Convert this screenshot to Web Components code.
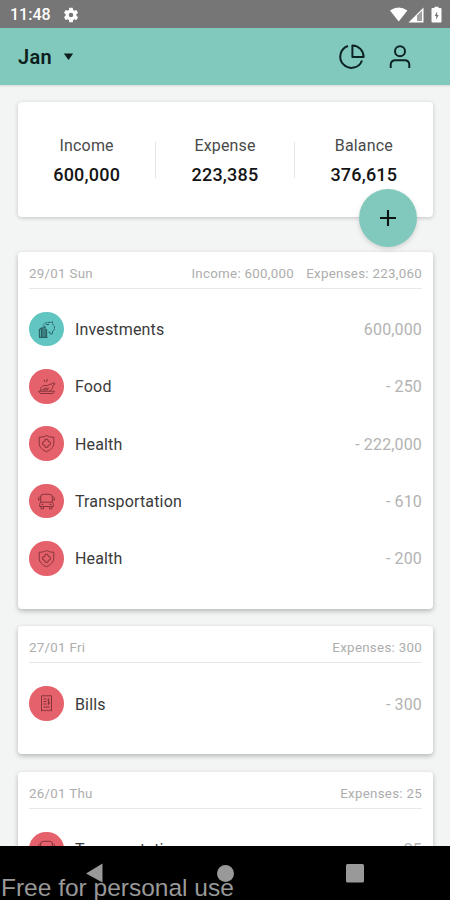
<!DOCTYPE html>
<html lang="en">
<head>
<meta charset="utf-8">
<title>Budget</title>
<style>
  body {
    margin: 0;
    background: #f3f5f4;
    font-family: Roboto, "Liberation Sans", sans-serif;
  }
</style>
</head>
<body>
<budget-app>
  <status-bar slot="top">11:48</status-bar>
  <app-header slot="top">Jan</app-header>

  <summary-card>
    <summary-item label="Income">600,000</summary-item>
    <summary-item label="Expense">223,385</summary-item>
    <summary-item label="Balance">376,615</summary-item>
  </summary-card>

  <day-card date="29/01 Sun" income="600,000" expenses="223,060">
    <entry-row icon="invest" amount="600,000">Investments</entry-row>
    <entry-row icon="food" amount="- 250">Food</entry-row>
    <entry-row icon="health" amount="- 222,000">Health</entry-row>
    <entry-row icon="bus" amount="- 610">Transportation</entry-row>
    <entry-row icon="health" amount="- 200">Health</entry-row>
  </day-card>
  <day-card date="27/01 Fri" expenses="300">
    <entry-row icon="bills" amount="- 300">Bills</entry-row>
  </day-card>
  <day-card date="26/01 Thu" expenses="25">
    <entry-row icon="bus" amount="- 25">Transportation</entry-row>
  </day-card>

  <nav-bar slot="bottom">Free for personal use</nav-bar>
</budget-app>

<script>
//App shell
class BudgetApp extends HTMLElement {
  constructor() {
    super();
    this.attachShadow({ mode: "open" });
    this.shadowRoot.innerHTML = `
      <style>
      :host {
        display: flex;
        flex-direction: column;
        height: 900px;
        overflow: hidden;
      }

      main {
        flex: 1;
        min-height: 0;
        overflow: hidden;
        box-sizing: border-box;
        padding: 17px 17px 0 18px;
      }
      </style>
      <slot name="top"></slot>
      <main><slot></slot></main>
      <slot name="bottom"></slot>
    `;
  }
}
customElements.define("budget-app", BudgetApp);

//Status bar
class StatusBar extends HTMLElement {
  constructor() {
    super();
    this.attachShadow({ mode: "open" });
    this.shadowRoot.innerHTML = `
      <style>
      :host {
        display: flex;
        align-items: center;
        flex: none;
        height: 28px;
        box-sizing: border-box;
        padding: 2px 8px 0 10px;
        background: #767676;
        color: white;
        font-size: 16px;
        font-weight: 500;
        line-height: 20px;
      }

      svg { display: block; fill: white; }
      .gear { margin-left: 11px; margin-right: auto; }
      </style>
      <slot></slot>
      <svg class="gear" width="18" height="18" viewBox="0 0 24 24"><path d="M19.14 12.94c.04-.3.06-.61.06-.94s-.02-.64-.07-.94l2.03-1.58a.5.5 0 0 0 .12-.61l-1.92-3.32a.5.5 0 0 0-.59-.22l-2.39.96a7 7 0 0 0-1.62-.94l-.36-2.54a.5.5 0 0 0-.48-.41h-3.84a.5.5 0 0 0-.47.41l-.36 2.54c-.59.24-1.13.57-1.62.94l-2.39-.96a.5.5 0 0 0-.59.22L2.74 8.87a.5.5 0 0 0 .12.61l2.03 1.58a6 6 0 0 0 0 1.88l-2.03 1.58a.5.5 0 0 0-.12.61l1.92 3.32c.12.22.37.29.59.22l2.39-.96c.5.38 1.03.7 1.62.94l.36 2.54c.05.24.24.41.48.41h3.84c.24 0 .44-.17.47-.41l.36-2.54a7 7 0 0 0 1.62-.94l2.39.96c.22.08.47 0 .59-.22l1.92-3.32a.5.5 0 0 0-.12-.61zM12 15a3 3 0 1 1 0-6 3 3 0 0 1 0 6z"/></svg>
      <svg width="52" height="18" viewBox="0 0 52 18">
        <path d="M0 4.500Q8.700 -1.500 17.400 4.500L8.700 15.500z"/>
        <path fill-rule="evenodd" d="M33.500 1.500V16.500H18.500zM27 9.800V15H32V4.800z"/>
        <path d="M27 9.800L32 4.800V15H27z" opacity=".3"/>
        <path fill-rule="evenodd" d="M44.500 2V.8h4V2H50.500a1 1 0 0 1 1 1v12.500a1 1 0 0 1-1 1h-8a1 1 0 0 1-1-1V3a1 1 0 0 1 1-1zM47.200 5.500l-2.500 4.500h1.500V13.500l2.500-4.500h-1.500z"/>
      </svg>
    `;
  }
}
customElements.define("status-bar", StatusBar);

//Header with the month picker
class AppHeader extends HTMLElement {
  constructor() {
    super();
    this.attachShadow({ mode: "open" });
    this.shadowRoot.innerHTML = `
      <style>
      :host {
        display: flex;
        align-items: center;
        flex: none;
        height: 57px;
        box-sizing: border-box;
        padding: 0 37px 0 18px;
        background: #82c9bd;
        box-shadow: 0 1px 2px rgba(0, 0, 0, 0.12);
        color: #0d1f1d;
        font-size: 20px;
        font-weight: 600;
        letter-spacing: 0.3px;
      }

      svg { display: block; }
      .caret { margin-left: 11px; margin-right: auto; }
      .icon {
        fill: none;
        stroke: #0d2422;
        stroke-width: 2;
        stroke-linejoin: round;
      }
      .user { margin-left: 22px; }
      </style>
      <slot></slot>
      <svg class="caret" width="11" height="8" viewBox="0 0 11 8"><path d="M.8 .5H10.200L5.500 7z" fill="#0d1f1d"/></svg>
      <svg class="icon" width="28" height="28" viewBox="0 0 28 28">
        <path d="M11 3A11.200 11.200 0 1 0 25 17.500"/>
        <path d="M15.400 2.400V14H26.600A11.500 11.500 0 0 0 15.400 2.400z"/>
      </svg>
      <svg class="icon user" width="26" height="28" viewBox="0 0 26 28">
        <circle cx="13" cy="8.300" r="5"/>
        <path d="M3.700 25V22Q3.700 17.300 8.500 17.300H17.500Q22.300 17.300 22.300 22V25"/>
      </svg>
    `;
  }
}
customElements.define("app-header", AppHeader);

//Summary
class SummaryCard extends HTMLElement {
  constructor() {
    super();
    this.attachShadow({ mode: "open" });
    this.shadowRoot.innerHTML = `
      <style>
      :host {
        display: grid;
        grid-template-columns: repeat(3, 1fr);
        align-items: center;
        position: relative;
        height: 115px;
        margin-bottom: 35px;
        box-sizing: border-box;
        background: white;
        border-radius: 4px;
        box-shadow: 0 1px 4px rgba(0, 0, 0, 0.2);
      }

      button {
        position: absolute;
        right: 16.500px;
        bottom: -29.500px;
        width: 58px;
        height: 58px;
        padding: 0;
        border: 0;
        border-radius: 50%;
        background: #82c9bd;
        box-shadow: 0 2px 5px rgba(0, 0, 0, 0.14);
      }

      svg { display: block; margin: auto; }
      </style>
      <slot></slot>
      <button aria-label="Add"><svg width="18" height="18" viewBox="0 0 18 18"><path d="M9 1V17M1 9H17" stroke="#0b1614" stroke-width="2.100"/></svg></button>
    `;
  }
}
customElements.define("summary-card", SummaryCard);

class SummaryItem extends HTMLElement {
  constructor() {
    super();
    this.attachShadow({ mode: "open" });
  }

  connectedCallback() {
    this.shadowRoot.innerHTML = `
      <style>
      :host {
        display: flex;
        flex-direction: column;
        align-items: center;
        justify-content: center;
        height: 36px;
        padding-top: 1px;
        box-sizing: border-box;
        line-height: 29px;
        color: #141414;
        font-size: 18px;
        font-weight: 500;
        letter-spacing: 0.2px;
      }

      :host(:not(:last-of-type)) { border-right: 1px solid #e4e4e4; }

      .label {
        color: #4a4a4a;
        font-size: 16px;
        font-weight: 400;
        letter-spacing: 0.15px;
      }
      </style>
      <span class="label">${this.getAttribute("label")}</span>
      <span><slot></slot></span>
    `;
  }
}
customElements.define("summary-item", SummaryItem);

//One day of entries
class DayCard extends HTMLElement {
  constructor() {
    super();
    this.attachShadow({ mode: "open" });
  }

  connectedCallback() {
    const income = this.getAttribute("income");
    const expenses = this.getAttribute("expenses");

    this.shadowRoot.innerHTML = `
      <style>
      :host {
        display: block;
        margin-bottom: 17.500px;
        padding: 0 11px 22px;
        background: white;
        border-radius: 4px;
        box-shadow: 0 2px 5px rgba(0, 0, 0, 0.26);
      }

      header {
        display: flex;
        align-items: center;
        gap: 12px;
        height: 36px;
        margin-bottom: 11.500px;
        border-bottom: 1px solid #e8e8e8;
        color: #adadad;
        font-size: 13.300px;
        letter-spacing: 0.3px;
      }

      header span { padding-top: 7px; }
      .date { margin-right: auto; }
      </style>
      <header>
        <span class="date">${this.getAttribute("date")}</span>
        ${income ? `<span>Income: ${income}</span>` : ""}
        <span>Expenses: ${expenses}</span>
      </header>
      <slot></slot>
    `;
  }
}
customElements.define("day-card", DayCard);

//Entry
const icons = {
  invest: `
    <path d="M2.500 17V9.500L4.500 8V17M6 17V7.500L8 6.500V17M9.500 17V9M2 17.300H10.500" stroke-width="1.300"/>
    <path d="M6 5.500C7.500 3 10 2 13 2.500L15.500 1.800V4L17.500 6.500V9.500L15.500 11V14H13V12.200H11" stroke-dasharray="2.500 .6"/>
    <path d="M9 4.500H12"/>`,
  food: `
    <path d="M1.500 14.200H17.500L16 16.500H3.500z"/>
    <path d="M3.500 14C3 10.500 5.500 8 9 8.500C11.500 9 12 6.800 14.500 7L17 5.500L18 7L15.800 8.500C16 11 14.500 13 12.500 14M7 11.500C8.500 10.500 10 12 12 11M5 12.800H11"/>
    <path d="M7 2.500L8 5M10.500 2L9.500 5"/>`,
  health: `
    <path d="M9.500 1.500C11.500 2.800 14 3.300 16.800 3.200V9C16.800 13.500 13.500 16 9.500 17.700C5.500 16 2.200 13.500 2.200 9V3.200C5 3.300 7.500 2.800 9.500 1.500z"/>
    <path d="M8 5.300H11V7.300L13.300 8V10.800L11 11.300V13.300H8V11.300L5.700 10.800V8L8 7.300z"/>`,
  bus: `
    <path d="M3.700 10.200V5Q3.700 2.300 6.200 2.300H12.800Q15.300 2.300 15.300 5V10.200zM3.700 10.200Q2.700 11 2.700 12.500V14.500H16.300V12.500Q16.300 11 15.300 10.200"/>
    <path d="M3.700 4.800H2.700L1.500 6V8H3.500M15.300 4.800H16.300L17.500 6V8H15.500M4 14.500V16.800H6.500V14.500M12.500 14.500V16.800H15V14.500M4.500 12.400H6.500M12.500 12.400H14.500"/>`,
  bills: `
    <path d="M4.500 1.800H14.500V17L12.800 16L11.200 17L9.500 16L7.800 17L6.200 16L4.500 17z"/>
    <path d="M6.500 5H9.500M6.500 7.500H9.500M6.500 10H9.500M6.500 13H12.500M12.300 5.500Q10.500 5 10.800 6.500Q12.800 7.500 12.500 9.500L10.700 10M11.600 4.500V11"/>`
};

class EntryRow extends HTMLElement {
  constructor() {
    super();
    this.attachShadow({ mode: "open" });
  }

  connectedCallback() {
    const icon = this.getAttribute("icon");

    this.shadowRoot.innerHTML = `
      <style>
      :host {
        display: flex;
        align-items: center;
        height: 57.300px;
        color: #3a3a3a;
        font-size: 16px;
        letter-spacing: 0.15px;
      }

      .badge {
        display: grid;
        place-items: center;
        width: 34.500px;
        height: 34.500px;
        margin-right: 11.500px;
        border-radius: 50%;
        background: #e5616b;
        color: #87343c;
      }

      .badge.invest { background: #61c5c1; color: #2b6265; }

      svg {
        fill: none;
        stroke: currentColor;
        stroke-width: 1;
        stroke-linejoin: round;
      }

      .name, .amount { padding-top: 1px; }
      .amount { margin-left: auto; color: #b3b3b3; }
      </style>
      <span class="badge ${icon}"><svg width="19" height="19" viewBox="0 0 19 19">${icons[icon]}</svg></span>
      <span class="name"><slot></slot></span>
      <span class="amount">${this.getAttribute("amount")}</span>
    `;
  }
}
customElements.define("entry-row", EntryRow);

//System navigation
class NavBar extends HTMLElement {
  constructor() {
    super();
    this.attachShadow({ mode: "open" });
    this.shadowRoot.innerHTML = `
      <style>
      :host {
        display: block;
        position: relative;
        flex: none;
        height: 54px;
        background: black;
        color: #999;
        font-family: "Liberation Sans", Arial, sans-serif;
        font-size: 24.500px;
        line-height: 24px;
      }

      .keys {
        display: flex;
        justify-content: space-between;
        padding: 17px 85px 0;
      }

      .keys svg { display: block; fill: #999; }

      .note {
        position: absolute;
        left: 1px;
        bottom: 0;
        white-space: nowrap;
      }
      </style>
      <div class="keys">
        <svg width="20" height="20" viewBox="0 0 20 20"><path d="M17.500 .5V19.500L1 10.500z"/></svg>
        <svg width="20" height="20" viewBox="0 0 20 20"><circle cx="10.500" cy="10.500" r="8.500"/></svg>
        <svg width="20" height="20" viewBox="0 0 20 20"><rect x="1" y="1" width="18" height="18.500" rx="1.500"/></svg>
      </div>
      <div class="note"><slot></slot></div>
    `;
  }
}
customElements.define("nav-bar", NavBar);
</script>
</body>
</html>
